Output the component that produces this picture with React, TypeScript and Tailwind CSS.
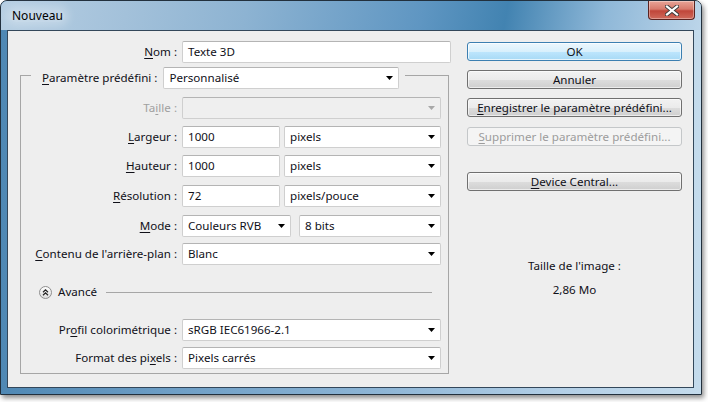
import React from "react";

type Kids = { children?: React.ReactNode };

const U = ({ children }: Kids) => <span className="underline underline-offset-2">{children}</span>;

const Arrow = ({ disabled }: { disabled?: boolean }) => (
  <svg width="7" height="4" viewBox="0 0 7 4" className="shrink-0">
    <path d="M0 0h7L3.5 4z" fill={disabled ? "#a8a8a8" : "#000"} />
  </svg>
);

const TextBox = ({ value, className = "" }: { value: string; className?: string }) => (
  <div
    className={`${className} h-[22px] flex items-center pl-[5px] bg-white border border-[#cfcfcf] border-t-[#b4b4b4] rounded-[2px]`}
  >
    {value}
  </div>
);

const Combo = ({ value, className = "", disabled }: { value?: string; className?: string; disabled?: boolean }) => (
  <div
    className={`${className} h-[22px] flex items-center justify-between pl-[5px] pr-[5px] border border-[#cfcfcf] border-t-[#b4b4b4] rounded-[2px] ${
      disabled ? "bg-[#efefef]" : "bg-white"
    }`}
  >
    <span>{value}</span>
    <Arrow disabled={disabled} />
  </div>
);

const Row = ({ label, children, className = "", disabled }: Kids & { label: React.ReactNode; className?: string; disabled?: boolean }) => (
  <div className={`${className} flex items-center h-[22px]`}>
    <div className={`w-[156px] text-right whitespace-nowrap ${disabled ? "text-[#a0a0a0]" : ""}`}>{label}</div>
    <div className="ml-[5px] flex">{children}</div>
  </div>
);

const Button = ({ children, variant, className = "" }: Kids & { variant?: "default" | "disabled"; className?: string }) => {
  if (variant === "default")
    return (
      <div
        className={`${className} h-[19px] flex items-center justify-center rounded-[3px] border border-[#3c7fb1] bg-[linear-gradient(#ecf7fd_0%,#d9f0fc_50%,#bee6fd_51%,#a7d9f5_100%)] shadow-[inset_0_0_0_1px_rgba(255,255,255,0.7)]`}
      >
        {children}
      </div>
    );
  if (variant === "disabled")
    return (
      <div
        className={`${className} h-[19px] flex items-center justify-center rounded-[3px] border border-[#c4c7c9] bg-[#f4f4f4] text-[#9c9c9c]`}
      >
        {children}
      </div>
    );
  return (
    <div
      className={`${className} h-[19px] flex items-center justify-center rounded-[3px] border border-[#707070] bg-[linear-gradient(#f2f2f2_0%,#ebebeb_50%,#dddddd_51%,#cfcfcf_100%)] shadow-[inset_0_0_0_1px_rgba(255,255,255,0.6)]`}
    >
      {children}
    </div>
  );
};

const AdvancedIcon = () => (
  <svg width="13" height="13" viewBox="0 0 13 13" className="shrink-0">
    <defs>
      <linearGradient id="adv" x1="0" y1="0" x2="0" y2="1">
        <stop offset="0" stopColor="#ffffff" />
        <stop offset="1" stopColor="#dcdcdc" />
      </linearGradient>
    </defs>
    <circle cx="6.5" cy="6.5" r="6" fill="url(#adv)" stroke="#8e8e8e" />
    <path d="M4 6.2l2.5-2.4 2.5 2.4M4 9.2l2.5-2.4 2.5 2.4" fill="none" stroke="#222" strokeWidth="1.2" />
  </svg>
);

const CloseButton = () => (
  <div className="w-[47px] h-[19px] rounded-b-[4px] border border-[#5a2320] border-t-0 bg-[linear-gradient(#e8a497_0%,#d77a6c_45%,#c0463a_55%,#cf6a5b_100%)] flex items-center justify-center shadow-[inset_0_0_0_1px_rgba(255,255,255,0.35)]">
    <svg width="14" height="11" viewBox="0 0 14 11">
      <path d="M2 1.5l10 8M12 1.5l-10 8" stroke="#3a3a3a" strokeWidth="4" strokeLinecap="square" />
      <path d="M2 1.5l10 8M12 1.5l-10 8" stroke="#fff" strokeWidth="2.2" strokeLinecap="square" />
    </svg>
  </div>
);

export default function App() {
  return (
    <div className="w-[708px] h-[402px] bg-white font-['Noto_Sans',sans-serif] text-[11.6px] leading-none text-[#101018]">
      <div className="w-[702px] h-[395px] rounded-t-[7px] border border-[#22303d] shadow-[2px_3px_5px_rgba(0,0,0,0.45)] bg-[linear-gradient(90deg,#4f88b4_0%,#6f9fc6_25%,#8fb6d6_55%,#b3cfe6_80%,#c4dbec_100%)] flex flex-col">
        {/* title bar */}
        <div className="h-[29px] shrink-0 rounded-t-[6px] flex items-start justify-between bg-[linear-gradient(100deg,#b7cfe3_0%,#a3c1da_18%,#8db3d2_35%,#5f96c2_60%,#4283b1_72%,#8fb8d8_86%,#bcd5e9_100%)]">
          <div className="mt-[9px] ml-[9px] px-[2px] rounded-[8px] text-[12px] text-black bg-[rgba(255,255,255,0.25)] shadow-[0_0_8px_4px_rgba(255,255,255,0.25)]">
            Nouveau
          </div>
          <div className="mr-[6px]">
            <CloseButton />
          </div>
        </div>
        {/* client area */}
        <div className="ml-[6px] w-[687px] h-[358px] border border-[#33475a] bg-[#eeeeee] flex">
          {/* left column */}
          <div className="w-[459px] flex flex-col">
            <div className="mt-[10px] flex items-center h-[22px]">
              <div className="w-[169px] text-right">
                <U>N</U>om :
              </div>
              <TextBox value="Texte 3D" className="ml-[5px] w-[269px] border-[#b8c8d8] border-t-[#a7b9cc]" />
            </div>
            <div className="mt-[12px] ml-[12px] w-[429px] h-[299px] border border-[#a6a6a6] flex flex-col">
              {/* legend */}
              <div className="-mt-[9px] ml-[10px] pl-[11px] pr-[6px] bg-[#eeeeee] self-start flex items-center h-[22px]">
                <span className="whitespace-nowrap">
                  <U>P</U>aramètre prédéfini :
                </span>
                <Combo value="Personnalisé" className="ml-[6px] w-[236px]" />
              </div>
              <Row label={<>Ta<U>i</U>lle :</>} disabled className="mt-[8px]">
                <Combo disabled className="w-[259px]" />
              </Row>
              <Row label={<><U>L</U>argeur :</>} className="mt-[7px]">
                <TextBox value="1000" className="w-[98px]" />
                <Combo value="pixels" className="ml-[4px] w-[157px]" />
              </Row>
              <Row label={<><U>H</U>auteur :</>} className="mt-[7px]">
                <TextBox value="1000" className="w-[98px]" />
                <Combo value="pixels" className="ml-[4px] w-[157px]" />
              </Row>
              <Row label={<><U>R</U>ésolution :</>} className="mt-[8px]">
                <TextBox value="72" className="w-[98px]" />
                <Combo value="pixels/pouce" className="ml-[4px] w-[157px]" />
              </Row>
              <Row label={<><U>M</U>ode :</>} className="mt-[8px]">
                <Combo value="Couleurs RVB" className="w-[109px]" />
                <Combo value="8 bits" className="ml-[8px] w-[142px]" />
              </Row>
              <Row label={<><U>C</U>ontenu de l'arrière-plan :</>} className="mt-[6px]">
                <Combo value="Blanc" className="w-[259px]" />
              </Row>
              <div className="mt-[19px] ml-[18px] mr-[16px] h-[16px] flex items-center">
                <AdvancedIcon />
                <span className="ml-[6px]">Avancé</span>
                <div className="ml-[9px] flex-1 h-px bg-[#a6a6a6]" />
              </div>
              <Row label={<>Pr<U>o</U>fil colorimétrique :</>} className="mt-[19px]">
                <Combo value="sRGB IEC61966-2.1" className="w-[259px]" />
              </Row>
              <Row label={<>Format des pi<U>x</U>els :</>} className="mt-[6px]">
                <Combo value="Pixels carrés" className="w-[259px]" />
              </Row>
            </div>
          </div>
          {/* right column */}
          <div className="w-[215px] pt-[11px] flex flex-col">
            <Button variant="default">OK</Button>
            <Button className="mt-[9px]">Annuler</Button>
            <Button className="mt-[9px]">
              <span>
                <U>E</U>nregistrer le paramètre prédéfini...
              </span>
            </Button>
            <Button variant="disabled" className="mt-[10px]">
              <span>
                <U>S</U>upprimer le paramètre prédéfini...
              </span>
            </Button>
            <Button className="mt-[26px]">
              <span>
                <U>D</U>evice Central...
              </span>
            </Button>
            <div className="mt-[69px] text-center">Taille de l'image :</div>
            <div className="mt-[12px] text-center">2,86 Mo</div>
          </div>
        </div>
      </div>
    </div>
  );
}
